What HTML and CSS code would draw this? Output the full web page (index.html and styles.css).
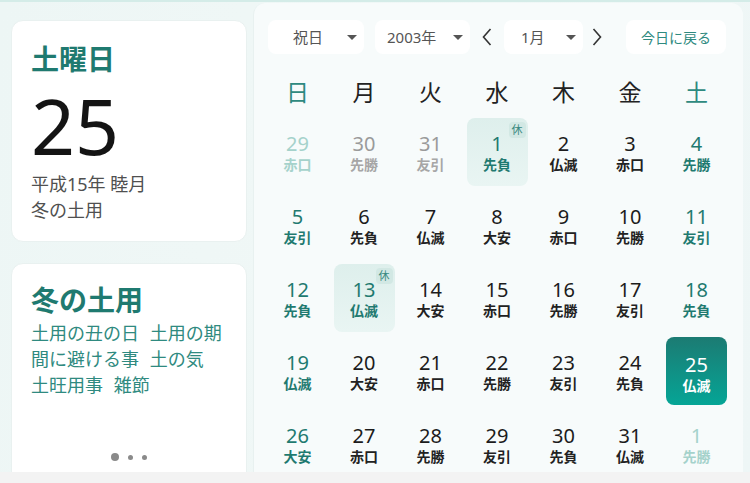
FILE: index.html
```html
<!DOCTYPE html>
<html lang="ja">
<head>
  <meta charset="UTF-8">
  <meta name="viewport" content="width=device-width, initial-scale=1.0">
  <title>カレンダー</title>
  <link rel="stylesheet" href="styles.css">
</head>
<body>
  <div class="app">
    <aside class="side">
      <section class="card today">
        <div class="today-week">土曜日</div>
        <div class="today-day">25</div>
        <div class="today-sub first">平成15年 睦月</div>
        <div class="today-sub">冬の土用</div>
      </section>
      <section class="card event">
        <div class="event-title">冬の土用</div>
        <div class="event-text">土用の丑の日 土用の期<br>間に避ける事 土の気<br>土旺用事 雑節</div>
        <div class="dots">
          <span class="dot big"></span>
          <span class="dot"></span>
          <span class="dot"></span>
        </div>
      </section>
    </aside>

    <main class="panel">
      <div class="toolbar">
        <div class="select sel-holiday">祝日<span class="caret"></span></div>
        <div class="select sel-year">2003年<span class="caret"></span></div>
        <button class="arrow arrow-prev">
          <svg width="10" height="18" viewBox="0 0 10 18"><polyline points="8.5,1 1.5,9 8.5,17" fill="none" stroke="#333" stroke-width="1.6"/></svg>
        </button>
        <div class="select sel-month">1月<span class="caret"></span></div>
        <button class="arrow arrow-next">
          <svg width="10" height="18" viewBox="0 0 10 18"><polyline points="1.5,1 8.5,9 1.5,17" fill="none" stroke="#333" stroke-width="1.6"/></svg>
        </button>
        <button class="today-btn">今日に戻る</button>
      </div>

      <div class="weekdays">
        <div class="wd weekend">日</div>
        <div class="wd">月</div>
        <div class="wd">火</div>
        <div class="wd">水</div>
        <div class="wd">木</div>
        <div class="wd">金</div>
        <div class="wd weekend">土</div>
      </div>

      <div class="days" id="days"></div>
    </main>
  </div>

  <script>
    const days = document.getElementById('days');

    // 2003年1月: 前月29日から翌月1日まで
    const nums = [29, 30, 31];
    for (let d = 1; d <= 31; d++) nums.push(d);
    nums.push(1);

    const rokuyo = ('赤口 先勝 友引 先負 仏滅 赤口 先勝 ' +
      '友引 先負 仏滅 大安 赤口 先勝 友引 ' +
      '先負 仏滅 大安 赤口 先勝 友引 先負 ' +
      '仏滅 大安 赤口 先勝 友引 先負 仏滅 ' +
      '大安 赤口 先勝 友引 先負 仏滅 先勝').split(' ');

    const holidays = [1, 13];
    const selected = 25;

    nums.forEach((n, i) => {
      const cell = document.createElement('div');
      cell.className = 'day';
      const outside = i < 3 || i > 33;
      const col = i % 7;

      if (col === 0 || col === 6) cell.classList.add('weekend');
      if (outside) cell.classList.add('outside');
      if (!outside && holidays.includes(n)) {
        cell.classList.add('holiday');
        cell.innerHTML += '<span class="badge">休</span>';
      }
      if (!outside && n === selected) cell.classList.add('selected');

      cell.innerHTML += `<span class="num">${n}</span><span class="rk">${rokuyo[i]}</span>`;
      days.appendChild(cell);
    });
  </script>
</body>
</html>
```

FILE: styles.css
```css
:root {
  --teal: #1f7a70;
  --teal-soft: #2f8a80;
  --text: #1c1c1c;
  --muted: #9a9a9a;
}

* {
  margin: 0;
  padding: 0;
  box-sizing: border-box;
}

body {
  font-family: "Noto Sans", "Noto Sans CJK JP", sans-serif;
  background: #f3f3f3;
  color: var(--text);
  width: 750px;
  height: 483px;
  overflow: hidden;
}

.app {
  height: 472px;
  display: flex;
  overflow: hidden;
  background: linear-gradient(100deg, #edf6f5 0%, #f1f8f7 60%, #eef6f6 100%);
  border-top: 2px solid #d4ece8;
}

/* left column */
.side {
  width: 236px;
  margin-left: 11px;
  padding-top: 18px;
  display: flex;
  flex-direction: column;
  gap: 21px;
  flex-shrink: 0;
}

.card {
  flex-shrink: 0;
  background: #fff;
  border-radius: 12px;
  border: 1px solid #e9f1f0;
  padding: 0 19px;
}

.today {
  height: 222px;
  padding-top: 21px;
}

.today-week {
  font-size: 28px;
  line-height: 34px;
  font-weight: 700;
  color: var(--teal);
}

.today-day {
  font-family: "Noto Sans", sans-serif;
  font-size: 77px;
  line-height: 62px;
  margin-top: 19px;
  color: #141414;
}

.today-sub {
  font-size: 18px;
  line-height: 26px;
  color: #505050;
}

.today-sub.first {
  margin-top: 14px;
}

.event {
  height: 224px;
  padding-top: 19px;
  display: flex;
  flex-direction: column;
}

.event-title {
  font-size: 28px;
  line-height: 34px;
  font-weight: 700;
  color: var(--teal);
}

.event-text {
  margin-top: 3px;
  font-size: 18px;
  line-height: 26px;
  word-spacing: 6px;
  color: var(--teal-soft);
}

.dots {
  margin-top: auto;
  margin-bottom: 25px;
  display: flex;
  justify-content: center;
  align-items: center;
  gap: 9px;
}

.dot {
  width: 5px;
  height: 5px;
  border-radius: 50%;
  background: #8a8a8a;
}

.dot.big {
  width: 8px;
  height: 8px;
}

/* calendar panel */
.panel {
  width: 490px;
  margin-left: 6px;
  margin-top: 1px;
  padding: 17px 0 0 13px;
  background: #f7fbfb;
  border-radius: 12px 12px 0 0;
  border-left: 1px solid #e8f1f0;
}

.toolbar {
  display: flex;
  align-items: center;
  height: 34px;
}

.select {
  position: relative;
  height: 34px;
  background: #fff;
  border-radius: 8px;
  font-size: 15px;
  line-height: 34px;
  color: #555;
}

.sel-holiday {
  width: 96px;
  margin-left: 1px;
  padding-left: 25px;
}

.sel-year {
  width: 95px;
  margin-left: 11px;
  padding-left: 12px;
}

.sel-month {
  width: 79px;
  padding-left: 17px;
}

.caret {
  position: absolute;
  right: 7px;
  top: 15px;
  border-left: 5px solid transparent;
  border-right: 5px solid transparent;
  border-top: 5px solid #555;
}

.arrow {
  background: none;
  border: none;
  height: 34px;
  display: flex;
  align-items: center;
  justify-content: center;
  cursor: pointer;
}

.arrow-prev {
  width: 34px;
}

.arrow-next {
  width: 28px;
}

.today-btn {
  margin-left: 15px;
  width: 100px;
  height: 34px;
  border: none;
  border-radius: 8px;
  background: #fff;
  font-family: inherit;
  font-size: 14px;
  color: var(--teal-soft);
  cursor: pointer;
}

.weekdays,
.days {
  display: grid;
  grid-template-columns: repeat(7, 61px);
  column-gap: 5.5px;
}

.weekdays {
  margin-top: 16px;
  height: 44px;
}

.wd {
  text-align: center;
  font-size: 23px;
  line-height: 44px;
  color: #222;
}

.wd.weekend {
  color: var(--teal-soft);
}

.days {
  margin-top: 4px;
  grid-auto-rows: 68px;
  row-gap: 5px;
}

.day {
  position: relative;
  border-radius: 8px;
  display: flex;
  flex-direction: column;
  align-items: center;
  padding-top: 15px;
}

.num {
  font-size: 20px;
  line-height: 22px;
}

.rk {
  font-size: 14px;
  line-height: 20px;
  font-weight: 700;
  color: #222;
}

.day.weekend .num,
.day.weekend .rk,
.day.holiday .num,
.day.holiday .rk {
  color: var(--teal);
}

.day.outside .num {
  color: var(--muted);
}

.day.outside .rk {
  color: #a6a6a6;
}

.day.outside.weekend .num,
.day.outside.weekend .rk {
  color: #a5d2cb;
}

.day.holiday {
  background: linear-gradient(180deg, #deefec 0%, #e9f5f3 100%);
}

.badge {
  position: absolute;
  top: 4px;
  right: 2px;
  width: 17px;
  height: 16px;
  border-radius: 4px;
  background: #d2e8e4;
  color: #3a8a80;
  font-size: 11px;
  line-height: 16px;
  text-align: center;
}

.day.selected {
  background: linear-gradient(180deg, #1c7b73 0%, #05a596 100%);
  padding-top: 17px;
}

.day.selected .num,
.day.selected .rk {
  color: #fff;
}
```
